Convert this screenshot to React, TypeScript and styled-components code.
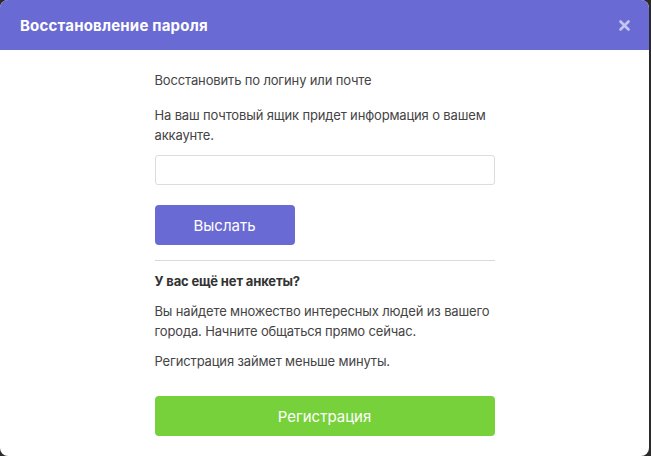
import styled, { createGlobalStyle } from 'styled-components';

const GlobalStyle = createGlobalStyle`
  html, body {
    margin: 0;
    padding: 0;
    background: #2b2b2b;
  }
  * {
    box-sizing: border-box;
  }
`;

const Modal = styled.section`
  width: 649px;
  height: 456px;
  background: #fff;
  border-radius: 8px;
  overflow: hidden;
  font-family: Inter, 'Noto Sans', sans-serif;
  display: flex;
  flex-direction: column;
`;

const Header = styled.header`
  height: 50px;
  flex: none;
  background: #6a6ad4;
  display: flex;
  align-items: center;
  justify-content: space-between;
  padding: 0 18px 0 20px;
`;

const Title = styled.h2`
  margin: 0;
  color: #fff;
  font-size: 15px;
  font-weight: 700;
  letter-spacing: 0.2px;
`;

const Close = styled.button`
  border: 0;
  background: none;
  padding: 0;
  width: 14px;
  height: 14px;
  display: flex;
  align-items: center;
  justify-content: center;
  cursor: pointer;
`;

const Body = styled.div`
  width: 340px;
  margin: 0 auto;
  padding-top: 20px;
  display: flex;
  flex-direction: column;
`;

const Text = styled.p<{ $bold?: boolean; $gap?: number }>`
  margin: 0 0 ${(p) => p.$gap ?? 10}px;
  font-size: 13px;
  line-height: 20px;
  letter-spacing: -0.15px;
  color: ${(p) => (p.$bold ? '#333' : '#444')};
  font-weight: ${(p) => (p.$bold ? 700 : 400)};
`;

const Input = styled.input`
  height: 30px;
  width: 100%;
  border: 1px solid #dcdcdc;
  border-radius: 3px;
  padding: 0 10px;
  font: inherit;
  font-size: 13px;
  margin: 0 0 20px;
`;

const Button = styled.button<{ $color: string; $wide?: boolean }>`
  height: 40px;
  width: ${(p) => (p.$wide ? '100%' : '140px')};
  border: 0;
  border-radius: 4px;
  background: ${(p) => p.$color};
  color: #fff;
  font-family: inherit;
  font-size: 15px;
  cursor: pointer;
`;

const Divider = styled.hr`
  border: 0;
  border-top: 1px solid #d9d9d9;
  margin: 15px 0 10px;
`;

export default function App() {
  return (
    <>
      <GlobalStyle />
      <Modal>
        <Header>
          <Title>Восстановление пароля</Title>
          <Close aria-label="Закрыть">
            <svg width="11" height="11" viewBox="0 0 11 11">
              <path d="M1.5 1.5l8 8M9.5 1.5l-8 8" stroke="#c4c4ee" strokeWidth="2.6" strokeLinecap="round" />
            </svg>
          </Close>
        </Header>
        <Body>
          <Text $gap={15}>Восстановить по логину или почте</Text>
          <Text>На ваш почтовый ящик придет информация о вашем аккаунте.</Text>
          <Input type="text" />
          <Button $color="#6a6ad4">Выслать</Button>
          <Divider />
          <Text $bold>У вас ещё нет анкеты?</Text>
          <Text>Вы найдете множество интересных людей из вашего города. Начните общаться прямо сейчас.</Text>
          <Text $gap={25}>Регистрация займет меньше минуты.</Text>
          <Button $color="#76d13a" $wide>Регистрация</Button>
        </Body>
      </Modal>
    </>
  );
}
